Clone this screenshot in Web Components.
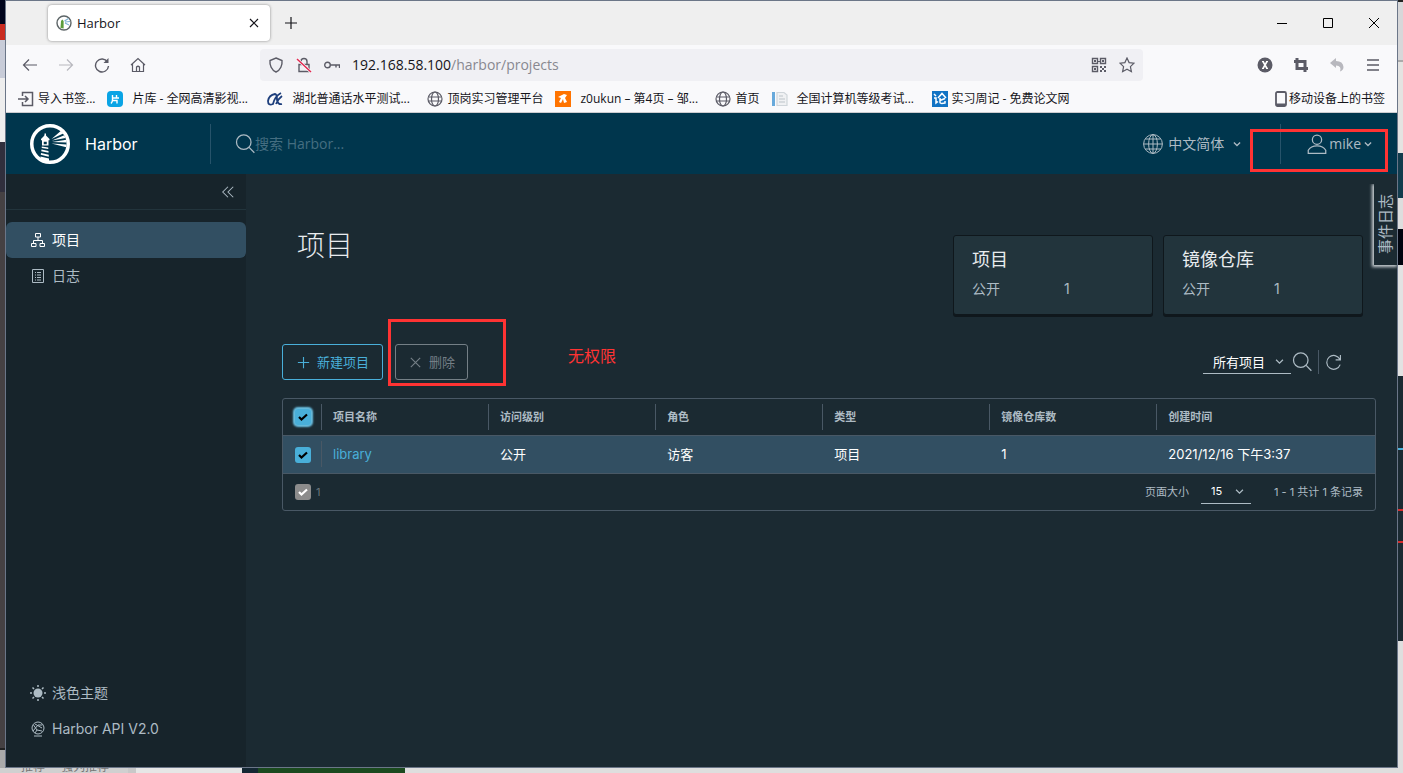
<!DOCTYPE html>
<html lang="zh-CN">
<head>
<meta charset="utf-8">
<title>Harbor</title>
<style>
  html, body {
    height: 100%;
    margin: 0;
  }

  body {
    --ui: 'Inter', 'Noto Sans CJK SC', sans-serif;
    --segoe: 'Open Sans', 'Noto Sans CJK SC', sans-serif;
    --page: #1b2a32;
    --rail: #17242b;
    --text: #adbbc4;
    --blue: #49afd9;
    --line: #495865;
    --selected: #324f62;
    --red: #ff3333;
    font: 14px/20px var(--ui);
    overflow: hidden;
  }
</style>
</head>
<body>
<desktop-area>
  <browser-window>
    <tab-strip slot="chrome"></tab-strip>
    <address-row slot="chrome"></address-row>
    <bookmarks-row slot="chrome"></bookmarks-row>
    <harbor-app></harbor-app>
  </browser-window>
</desktop-area>

<script>
const icons = {
  back: '<path d="M15 8H1.500M7 2.500L1.500 8L7 13.500"/>',
  forward: '<path d="M1 8H14.500M9 2.500L14.500 8L9 13.500"/>',
  reload: '<path d="M13.500 5A6.500 6.500 0 1 0 14.500 9"/><path d="M14.500 1V6H9.500Z" fill="currentColor" stroke="none"/>',
  home: '<path d="M1 8L8 1.500L15 8M2.500 7V14.500H13.500V7M6.500 14V10Q8 8.500 9.500 10V14"/>',
  shield: '<path d="M8 1L14 3.500C14.500 8 12.500 13 8 15C3.500 13 1.500 8 2 3.500Z"/>',
  lock: '<path d="M5 7V4.500Q5 1.500 8 1.500Q11 1.500 11 4.500V7M3 7.500H13V14.500H3Z"/><path d="M1 2L15 15" stroke="#f9f9fb" stroke-width="3"/><path d="M1 2L15 15" stroke="#e22850" stroke-width="1.500"/>',
  key: '<circle cx="3.500" cy="8" r="2.800"/><path d="M6.500 8H15.500V11M12 8V10.500"/>',
  qr: '<path d="M1.500 1.500H6.500V6.500H1.500ZM9.500 1.500H14.500V6.500H9.500ZM1.500 9.500H6.500V14.500H1.500Z" stroke-width="1.400"/><path d="M3 3h2v2H3zM11 3h2v2h-2zM3 11h2v2H3zM7 4h2v1H7zM9 9h2v2H9zM11 11h2v2h-2zM13 9h2v2h-2zM13 13h2v2h-2zM9 13h2v2H9z" fill="currentColor" stroke="none"/>',
  star: '<path d="M8 1L10.100 5.600L15 6.200L11.400 9.600L12.400 14.700L8 12.200L3.600 14.700L4.600 9.600L1 6.200L5.900 5.600Z"/>',
  xbadge: '<circle cx="8" cy="8" r="7.500" fill="currentColor" stroke="none"/><path d="M6 4.500L10 11.500M10 4.500L6 11.500" stroke="#fff" stroke-width="1.600"/><path d="M5 4.500H7M9 4.500H11M5 11.500H7M9 11.500H11" stroke="#fff" stroke-width="1"/>',
  crop: '<path d="M4 1V11.500H15M1 4.500H12V15" stroke-width="3"/>',
  undo: '<path d="M1 6L7 1V4Q14 4 14.500 10Q14.500 13 11 14.500Q13 9 7 8.500V11Z" fill="currentColor" stroke="none"/>',
  menu: '<path d="M2 3H14M2 8H14M2 13H14" stroke-linecap="butt"/>',
  close: '<path d="M4 4L12 12M12 4L4 12"/>',
  cancel: '<path d="M3 3L13 13M13 3L3 13"/>',
  plus: '<path d="M8 2V14M2 8H14"/>',
  min: '<path d="M3 8.500H13"/>',
  max: '<path d="M3.500 3.500H12.500V12.500H3.500Z"/>',
  importer: '<path d="M4.500 5V1.500H14.500V14.500H4.500V11M0 8H10M7 5L10 8L7 11" stroke-width="1.500"/>',
  film: '<rect width="16" height="16" rx="4" fill="#0aa4e5" stroke="none"/><path d="M5.500 4V9Q5.500 11 4 12.500M5.500 7H12M9.500 4V7M5.500 9.500H10V12.500" stroke="#fff" stroke-width="1.400"/>',
  hubei: '<path d="M14 2Q8 5 6 13Q1 15 1 10Q2 4 8 3Q10 3 10 9Q11 14 15 13M15 5Q11 8 9 13" stroke="#1d3e7c" stroke-width="1.800"/>',
  globe: '<circle cx="8" cy="8" r="7"/><ellipse cx="8" cy="8" rx="3.500" ry="7"/><path d="M1.500 6H14.500M1.500 10H14.500"/>',
  z: '<path d="M0 0H16V16H0Z" fill="#ff7300" stroke="none"/><path d="M3 6L9 3L12 4L10 7L12 11L9 12L8 8L6 12L4 11L6 7Z" fill="#fff" stroke="none"/>',
  exam: '<path d="M0 1H3V15H0Z" fill="#68a9db" stroke="none"/><path d="M5 1.500H12L15 4V14.500H5Z" fill="#f0f1f3" stroke="#cfd5da"/><path d="M7 5H11M7 8H13M7 11H13" stroke="#bcc3c9"/>',
  paper: '<path d="M0 0H16V16H0Z" fill="#1273c4" stroke="none"/><path d="M2 3L4 5M2 7H4V12L6 10.500M6 7L10 2.500L14 7M8 7V11.500Q8 13 13 12V10M13 7.500L8 9.500" stroke="#fff" stroke-width="1.500"/>',
  phone: '<rect x="3" y="1" width="10" height="14" rx="1.500" stroke-width="1.800"/><path d="M3 13.500H13" stroke-width="2"/>',
  favicon: '<circle cx="8" cy="8" r="7" fill="#fff" stroke="#5c6466" stroke-width="1.400"/><path d="M5 6L6.300 4.500L7.600 6V13.500L4.500 13Z" fill="#5b9c3b" stroke="none"/><path d="M8.500 6L12.500 3.500M9 7L14 6.500M9 8L13 10" stroke="#7fb2d2" stroke-width="1.200"/>',
  logo: '<circle cx="8" cy="8" r="7.300" stroke="#fff" stroke-width="1.400"/><g fill="#fff" stroke="none"><path d="M4.400 6L6.100 4.300L7.800 6V6.500H4.400Z"/><path d="M5.800 3.800h.600v1h-.600zM4.800 6.300H7.400V8.600H4.800Z"/><path d="M4.700 9L7.300 9.400V10L4.700 9.600ZM4.600 10.200L7.400 10.800V11.500L4.500 10.900ZM4.400 11.600L7.500 12.300V13.100L4.300 12.300ZM4.200 13L7.600 13.800V15.100L4.200 14.200Z"/><path d="M8.600 6L12.300 2.800L13.300 3.800ZM8.800 6.600L13.700 4.500L14.200 5.600ZM8.800 7.200L14.600 6.300V7.400ZM8.600 7.800L14.600 8.200L14.500 9.300Z"/></g><path d="M5.500 7.100h1.200v1h-1.200z" fill="#00364d" stroke="none"/>',
  search: '<circle cx="7" cy="6.500" r="5.800"/><path d="M11.300 10.700L15.500 15"/>',
  world: '<circle cx="8" cy="8" r="7.500"/><ellipse cx="8" cy="8" rx="3.500" ry="7.500"/><path d="M8 0V16M.500 8H15.500M2 4H14M2 12H14"/>',
  user: '<circle cx="8" cy="4.500" r="3.700"/><path d="M1 15.500V13Q3 9.500 8 9.500T15 13V15.500Z"/>',
  chevron: '<path d="M3 5.500L8 10.500L13 5.500"/>',
  collapse: '<path d="M8 2L2 8L8 14M14 2L8 8L14 14"/>',
  projects: '<path d="M5.500 1.500H10.500V5H5.500ZM1.500 11.500H6V14.500H1.500ZM10 11.500H14.500V14.500H10ZM8 5V8.500M3.500 11.500V8.500H12.500V11.500"/>',
  logs: '<path d="M2.500 1.500H13.500V14.500H2.500Z"/><path d="M5 4.500H6M7 4.500H11M5 7H6M7 7H11M5 9.500H6M7 9.500H11M5 12H6M7 12H11"/>',
  sun: '<circle cx="8" cy="8" r="4.500" fill="currentColor" stroke="none"/><path d="M8 0V2M8 14V16M0 8H2M14 8H16M2.500 2.500L4 4M12 12L13.500 13.500M13.500 2.500L12 4M4 12L2.500 13.500" stroke-width="1.500"/>',
  api: '<circle cx="8" cy="7" r="6"/><path d="M3.500 4L7 9L12 10M12.500 4H8L3 10M7 9L5 12M5 3L12 7M4 15H12"/>',
  refresh: '<path d="M14 5A6.500 6.500 0 1 0 14.300 10M14.500 1V5.500H10"/>',
  check: '<path d="M4 8L6.500 10.500L12 5.500" stroke-width="2.200"/>'
};

class AppIcon extends HTMLElement {
  connectedCallback() {
    const size = this.getAttribute('size') || 16;
    const weight = this.getAttribute('weight') || 1.2;
    this.attachShadow({mode: 'open'});
    this.shadowRoot.innerHTML = /*html*/ `
      <style>
        :host { display: inline-flex; flex: none; }
      </style>
      <svg width="${size}" height="${size}" viewBox="0 0 16 16" fill="none"
        stroke="currentColor" stroke-width="${weight}" aria-hidden="true">${icons[this.getAttribute('name')]}</svg>
    `;
  }
}

customElements.define('app-icon', AppIcon);

// Rules that every shadow root needs.
const reset = /*css*/ `
  * { box-sizing: border-box; }
  button { display: flex; align-items: center; justify-content: center; margin: 0; padding: 0; border: 0; background: none; color: inherit; font: inherit; }
  a { color: inherit; text-decoration: none; }
`;

class BaseElement extends HTMLElement {
  constructor() {
    super();
    this.attachShadow({mode: 'open'});
  }

  connectedCallback() {
    this.shadowRoot.innerHTML = `<style>${reset}${this.css()}</style>${this.html()}`;
  }
}

class DesktopArea extends BaseElement {
  css() {
    return /*css*/ `
      :host {
        display: grid;
        grid-template: minmax(0, 1fr) 5px / 5px minmax(0, 1fr) 5px;
        height: 100vh;
        background: #e4e4e4;
      }
      ::slotted(browser-window) { z-index: 1; }
      .left { background: linear-gradient(#00041c 0 24px, #c92b20 24px 40px, #c8ccd8 40px 78px, #eee 78px 142px, #302f3d 142px 192px, #454143 192px 748px, #222 748px 750px, #aaa 750px); }
      .right { background: linear-gradient(#222 0 2px, #d7d7d9 2px 60px, #aaa 60px 62px, #e4e3e1 62px 153px, #123c4d 153px 198px, #ddd 198px 229px, #00040e 229px 265px, #e2e2e2 265px 376px, #1b2a32 376px 448px, #49afd9 448px 450px, #1b2a32 450px 509px, #d62b2b 509px 511px, #1b2a32 511px 541px, #d62b2b 541px 543px, #1b2a32 543px 641px, #dedede 641px); }
      .bottom {
        display: flex;
        align-items: flex-end;
        grid-column: 1 / -1;
        padding-left: 21px;
        background: linear-gradient(90deg, #d0d0d0 0 128px, #c8c8c8 128px 136px, #e6e6e6 136px 242px, #142733 242px 258px, #1b4a1f 258px 405px, #dedede 405px);
        color: #777;
        font-size: 12px;
        line-height: 12px;
        gap: 16px;
      }
    `;
  }

  html() {
    return /*html*/ `
      <div class="left"></div>
      <slot></slot>
      <div class="right"></div>
      <div class="bottom"><span>推荐</span><span>强列推荐</span></div>
    `;
  }
}

class BrowserWindow extends BaseElement {
  css() {
    return /*css*/ `
      :host { display: flex; flex-direction: column; border: 1px solid #6b7688; background: #f9f9fb; color: #15141a; }
      ::slotted(harbor-app) { flex: 1; min-height: 0; }
    `;
  }

  html() {
    return '<slot name="chrome"></slot><slot></slot>';
  }
}

class TabStrip extends BaseElement {
  css() {
    return /*css*/ `
      :host { display: flex; align-items: center; height: 44px; padding-left: 42px; background: #efefef; font: 13px/16px var(--segoe); }
      .tab { display: flex; align-items: center; gap: 5px; width: 222px; height: 36px; padding: 0 8px; border-radius: 4px; background: #fff; box-shadow: 0 0 3px #888; }
      .tab button { margin-left: auto; }
      .add { width: 42px; height: 36px; }
      .controls { display: flex; margin-left: auto; color: #000; }
      .controls button { width: 46px; height: 36px; }
    `;
  }

  html() {
    return /*html*/ `
      <div class="tab">
        <app-icon name="favicon"></app-icon>
        <span>Harbor</span>
        <button aria-label="Close tab"><app-icon name="close"></app-icon></button>
      </div>
      <button class="add" aria-label="New tab"><app-icon name="plus"></app-icon></button>
      <div class="controls">
        <button aria-label="Minimize"><app-icon name="min" weight="1"></app-icon></button>
        <button aria-label="Maximize"><app-icon name="max" weight="1"></app-icon></button>
        <button aria-label="Close"><app-icon name="cancel" weight="1"></app-icon></button>
      </div>
    `;
  }
}

class AddressRow extends BaseElement {
  css() {
    return /*css*/ `
      :host { display: flex; align-items: center; height: 40px; padding: 0 6px; color: #5b5b66; }
      button { width: 36px; height: 32px; }
      .dim { color: #b8b8be; }
      .url { display: flex; align-items: center; flex: 1; gap: 12px; height: 32px; margin: 0 104px; padding: 0 8px; border-radius: 4px; background: #f0f0f4; }
      .url button { width: 16px; }
      .address { flex: 1; font: 14px/20px var(--segoe); color: #888890; outline: none; }
      .address b { font-weight: 400; color: #15141a; }
    `;
  }

  html() {
    return /*html*/ `
      <button aria-label="Back"><app-icon name="back"></app-icon></button>
      <button class="dim" aria-label="Forward"><app-icon name="forward"></app-icon></button>
      <button aria-label="Reload"><app-icon name="reload" weight="1.4"></app-icon></button>
      <button aria-label="Home"><app-icon name="home"></app-icon></button>
      <div class="url">
        <button aria-label="Protection"><app-icon name="shield" weight="1.4"></app-icon></button>
        <button aria-label="Connection"><app-icon name="lock" weight="1.4"></app-icon></button>
        <button aria-label="Saved login"><app-icon name="key" weight="1.4"></app-icon></button>
        <div class="address" role="textbox" contenteditable="true" spellcheck="false" aria-label="Address"><b>192.168.58.100</b>/harbor/projects</div>
        <button aria-label="QR code"><app-icon name="qr"></app-icon></button>
        <button aria-label="Bookmark"><app-icon name="star"></app-icon></button>
      </div>
      <button aria-label="Extension"><app-icon name="xbadge"></app-icon></button>
      <button aria-label="Screenshot"><app-icon name="crop"></app-icon></button>
      <button class="dim" aria-label="Undo"><app-icon name="undo"></app-icon></button>
      <button aria-label="Menu"><app-icon name="menu" weight="1.4"></app-icon></button>
    `;
  }
}

class BookmarksRow extends BaseElement {
  css() {
    return /*css*/ `
      :host { display: flex; align-items: center; gap: 12px; height: 28px; padding: 0 12px; border-bottom: 1px solid #ccccd0; box-sizing: border-box; font: 12px/16px var(--segoe); white-space: nowrap; }
      a { display: flex; align-items: center; gap: 4px; }
      a.wide { gap: 9px; width: 148px; }
      a.last { gap: 0; margin-left: auto; }
      app-icon { color: #5b5b66; }
    `;
  }

  html() {
    return /*html*/ `
      <a href="#"><app-icon name="importer"></app-icon>导入书签...</a>
      <a href="#" class="wide"><app-icon name="film"></app-icon>片库 - 全网高清影视...</a>
      <a href="#" class="wide"><app-icon name="hubei"></app-icon>湖北普通话水平测试...</a>
      <a href="#"><app-icon name="globe"></app-icon>顶岗实习管理平台</a>
      <a href="#" class="wide"><app-icon name="z"></app-icon>z0ukun – 第4页 – 邹...</a>
      <a href="#"><app-icon name="globe"></app-icon>首页</a>
      <a href="#" class="wide"><app-icon name="exam"></app-icon>全国计算机等级考试...</a>
      <a href="#"><app-icon name="paper"></app-icon>实习周记 - 免费论文网</a>
      <a href="#" class="last"><app-icon name="phone"></app-icon>移动设备上的书签</a>
    `;
  }
}

class HarborApp extends BaseElement {
  css() {
    return /*css*/ `
      :host { display: flex; flex-direction: column; position: relative; background: var(--page); color: var(--text); }
      .body { display: flex; flex: 1; min-height: 0; }
      projects-page { flex: 1; min-width: 0; }
      event-tab { position: absolute; right: 0; top: 71px; }
    `;
  }

  html() {
    return /*html*/ `
      <harbor-header></harbor-header>
      <div class="body">
        <side-nav></side-nav>
        <projects-page></projects-page>
      </div>
      <event-tab>事件日志</event-tab>
    `;
  }
}

class HarborHeader extends BaseElement {
  css() {
    return /*css*/ `
      :host { display: flex; align-items: center; position: relative; height: 61px; background: #00364d; }
      .brand { display: flex; align-items: center; gap: 15px; width: 205px; height: 40px; padding-left: 24px; border-right: 1px solid #26536a; color: #fff; font-size: 16px; }
      .search { display: flex; align-items: center; flex: 1; padding-left: 24px; }
      input { flex: 1; min-width: 0; padding: 0; border: 0; outline: 0; background: none; color: var(--text); font: 14px/20px var(--segoe); }
      input::placeholder { color: #456e81; opacity: 1; }
      button { height: 40px; font-family: var(--segoe); }
      .language { gap: 5px; padding-right: 38px; }
      .language app-icon:last-child { margin-left: 3px; }
      .user { gap: 2px; padding: 0 24px 0 26px; border-left: 1px solid #26536a; }
      .callout { position: absolute; top: 16px; right: 9px; width: 138px; height: 43px; border: 3px solid var(--red); pointer-events: none; }
    `;
  }

  html() {
    return /*html*/ `
      <a href="#" class="brand"><app-icon name="logo" size="40"></app-icon>Harbor</a>
      <label class="search">
        <app-icon name="search" size="20" weight="1"></app-icon>
        <input type="search" placeholder="搜索 Harbor..." aria-label="搜索 Harbor...">
      </label>
      <button class="language"><app-icon name="world" size="20" weight="0.8"></app-icon>中文简体<app-icon name="chevron" size="10" weight="2"></app-icon></button>
      <button class="user"><app-icon name="user" size="20" weight="1"></app-icon>mike<app-icon name="chevron" size="10" weight="2"></app-icon></button>
      <div class="callout"></div>
    `;
  }
}

class NavItem extends BaseElement {
  css() {
    return /*css*/ `
      :host { display: block; }
      a { display: flex; align-items: center; gap: 6px; height: 36px; padding-left: 24px; border-radius: 6px; }
      :host([active]) a { background: var(--selected); color: #fff; }
    `;
  }

  html() {
    return /*html*/ `
      <a href="#"><app-icon name="${this.getAttribute('icon')}" weight="1"></app-icon><slot></slot></a>
    `;
  }
}

class SideNav extends BaseElement {
  css() {
    return /*css*/ `
      :host { display: flex; flex-direction: column; flex: none; width: 240px; background: var(--rail); }
      .top { display: flex; justify-content: flex-end; height: 36px; padding-right: 11px; border-bottom: 1px solid #22343c; }
      nav { flex: 1; padding-top: 12px; }
      .bottom { padding-bottom: 20px; }
    `;
  }

  html() {
    return /*html*/ `
      <div class="top"><button aria-label="Collapse"><app-icon name="collapse" size="14" weight="1.2"></app-icon></button></div>
      <nav>
        <nav-item icon="projects" active>项目</nav-item>
        <nav-item icon="logs">日志</nav-item>
      </nav>
      <div class="bottom">
        <nav-item icon="sun">浅色主题</nav-item>
        <nav-item icon="api">Harbor API V2.0</nav-item>
      </div>
    `;
  }
}

class StatCard extends BaseElement {
  css() {
    return /*css*/ `
      :host { display: block; width: 200px; height: 80px; padding: 12px 18px; border: 1px solid #0f171c; border-radius: 3px; background: #22343c; box-shadow: 0 2px 0 #0f171c; box-sizing: border-box; }
      h2 { margin: 0 0 8px; color: #e9ecef; font-size: 18px; font-weight: 400; line-height: 24px; }
      div { display: grid; grid-template-columns: 92px 1fr; line-height: 18px; }
    `;
  }

  html() {
    return /*html*/ `
      <h2><slot></slot></h2>
      <div><span>公开</span><span>${this.getAttribute('count')}</span></div>
    `;
  }
}

class CheckBox extends BaseElement {
  css() {
    return /*css*/ `
      :host { display: inline-grid; width: 16px; height: 16px; vertical-align: middle; color: #000; }
      input, app-icon { grid-area: 1 / 1; }
      input { appearance: none; width: 16px; height: 16px; margin: 0; border-radius: 3px; background: var(--blue); }
      app-icon { pointer-events: none; z-index: 1; }
      :host([focused]) input { box-shadow: 0 0 2px 2px #6bc1e3; }
      :host([off]) { color: #fff; }
      :host([off]) input { background: #8c8c8c; }
    `;
  }

  html() {
    return /*html*/ `
      <input type="checkbox" checked aria-label="${this.getAttribute('label')}" ${this.hasAttribute('off') ? 'disabled' : ''}>
      <app-icon name="check"></app-icon>
    `;
  }
}

class DropDown extends BaseElement {
  css() {
    return /*css*/ `
      :host { display: grid; align-items: center; height: 24px; border-bottom: 1px solid var(--text); }
      select, app-icon { grid-area: 1 / 1; }
      select { appearance: none; width: 100%; margin: 0; padding: 0 20px 0 10px; border: 0; background: none; color: #fff; font: inherit; }
      app-icon { justify-self: end; margin-right: 6px; pointer-events: none; }
    `;
  }

  html() {
    return /*html*/ `
      <select aria-label="${this.getAttribute('label')}"><option>${this.getAttribute('value')}</option></select>
      <app-icon name="chevron" size="11" weight="1.8"></app-icon>
    `;
  }
}

class ProjectsGrid extends BaseElement {
  css() {
    return /*css*/ `
      :host { display: block; border: 1px solid var(--line); border-radius: 3px; }
      table { width: 100%; table-layout: fixed; border-collapse: collapse; text-align: left; }
      .check { width: 38px; }
      .col { width: 15.3%; }
      th, td { padding: 0; line-height: 16px; }
      th { height: 36px; font-size: 11px; font-weight: 700; }
      td { height: 38px; border-top: 1px solid var(--line); border-bottom: 1px solid var(--line); background: var(--selected); color: #fff; font-size: 13px; }
      .cell { height: 26px; padding-left: 11px; line-height: 26px; }
      th .cell, td.name .cell { border-left: 1px solid var(--line); }
      td .cell { padding-left: 12px; }
      td.name .cell { padding-left: 11px; }
      th:first-child, td:first-child { padding-left: 12px; }
      td a { color: var(--blue); }
      footer { display: flex; align-items: center; height: 36px; padding: 0 12px; font-size: 11px; }
      .count { padding-left: 5px; color: #6b757c; }
      .size { margin-left: auto; padding-right: 12px; }
      drop-down { width: 50px; margin-right: 23px; }
    `;
  }

  html() {
    const headings = ['项目名称', '访问级别', '角色', '类型', '镜像仓库数', '创建时间'];
    const values = ['公开', '访客', '项目', '1', '2021/12/16 下午3:37'];
    return /*html*/ `
      <table>
        <colgroup><col class="check">${'<col class="col">'.repeat(5)}<col></colgroup>
        <thead>
          <tr>
            <th><check-box focused label="全选"></check-box></th>
            ${headings.map(text => `<th><div class="cell">${text}</div></th>`).join('')}
          </tr>
        </thead>
        <tbody>
          <tr>
            <td><check-box label="library"></check-box></td>
            <td class="name"><div class="cell"><a href="#">library</a></div></td>
            ${values.map(text => `<td><div class="cell">${text}</div></td>`).join('')}
          </tr>
        </tbody>
      </table>
      <footer>
        <check-box off label="已选"></check-box>
        <span class="count">1</span>
        <span class="size">页面大小</span>
        <drop-down label="页面大小" value="15"></drop-down>
        <span>1 - 1 共计 1 条记录</span>
      </footer>
    `;
  }
}

class ProjectsPage extends BaseElement {
  css() {
    return /*css*/ `
      :host { display: block; padding: 54px 21px 0 36px; }
      header { display: flex; justify-content: space-between; padding: 0 13px 0 15px; }
      h1 { margin: 0; color: #e9ecef; font-size: 28px; font-weight: 300; line-height: 36px; }
      .cards { display: flex; gap: 10px; padding-top: 7px; }
      .toolbar { display: flex; align-items: center; gap: 12px; margin: 29px 0 18px; padding-right: 34px; }
      .action { gap: 6px; height: 36px; padding: 0 13px; border: 1px solid var(--blue); border-radius: 3px; color: var(--blue); font-size: 13px; }
      .action:disabled { padding: 0 12px; border-color: #747f86; color: #747f86; }
      .target { position: relative; }
      .callout { position: absolute; left: -7px; top: -25px; width: 118px; height: 67px; border: 3px solid var(--red); pointer-events: none; }
      .note { position: absolute; left: 173px; top: 0; color: var(--red); font-size: 16px; line-height: 24px; white-space: nowrap; }
      .filters { display: flex; align-items: center; margin-left: auto; font-size: 13px; }
      .filters drop-down { width: 88px; }
      .filters button { height: 24px; }
      .find { padding: 0 6px 0 1px; }
      .again { padding-left: 6px; border-left: 1px solid var(--line); }
    `;
  }

  html() {
    return /*html*/ `
      <header>
        <h1>项目</h1>
        <div class="cards">
          <stat-card count="1">项目</stat-card>
          <stat-card count="1">镜像仓库</stat-card>
        </div>
      </header>
      <div class="toolbar">
        <button class="action"><app-icon name="plus" size="15"></app-icon>新建项目</button>
        <div class="target">
          <button class="action" disabled><app-icon name="cancel" size="15"></app-icon>删除</button>
          <div class="callout"></div>
          <div class="note">无权限</div>
        </div>
        <div class="filters">
          <drop-down label="项目类型" value="所有项目"></drop-down>
          <button class="find" aria-label="搜索"><app-icon name="search" size="20" weight="1"></app-icon></button>
          <button class="again" aria-label="刷新"><app-icon name="refresh" size="17" weight="1.1"></app-icon></button>
        </div>
      </div>
      <projects-grid></projects-grid>
    `;
  }
}

class EventTab extends BaseElement {
  css() {
    return /*css*/ `
      :host { display: block; background: var(--page); box-shadow: -1px 1px 3px 1px #c8ced2; clip-path: inset(0 0 -6px -6px); }
      button { width: 23px; height: 81px; }
      span { writing-mode: vertical-rl; text-orientation: sideways; transform: rotate(180deg); font-size: 15px; line-height: 20px; }
    `;
  }

  html() {
    return '<button><span><slot></slot></span></button>';
  }
}

customElements.define('desktop-area', DesktopArea);
customElements.define('browser-window', BrowserWindow);
customElements.define('tab-strip', TabStrip);
customElements.define('address-row', AddressRow);
customElements.define('bookmarks-row', BookmarksRow);
customElements.define('harbor-app', HarborApp);
customElements.define('harbor-header', HarborHeader);
customElements.define('nav-item', NavItem);
customElements.define('side-nav', SideNav);
customElements.define('stat-card', StatCard);
customElements.define('check-box', CheckBox);
customElements.define('drop-down', DropDown);
customElements.define('projects-grid', ProjectsGrid);
customElements.define('projects-page', ProjectsPage);
customElements.define('event-tab', EventTab);
</script>
</body>
</html>
